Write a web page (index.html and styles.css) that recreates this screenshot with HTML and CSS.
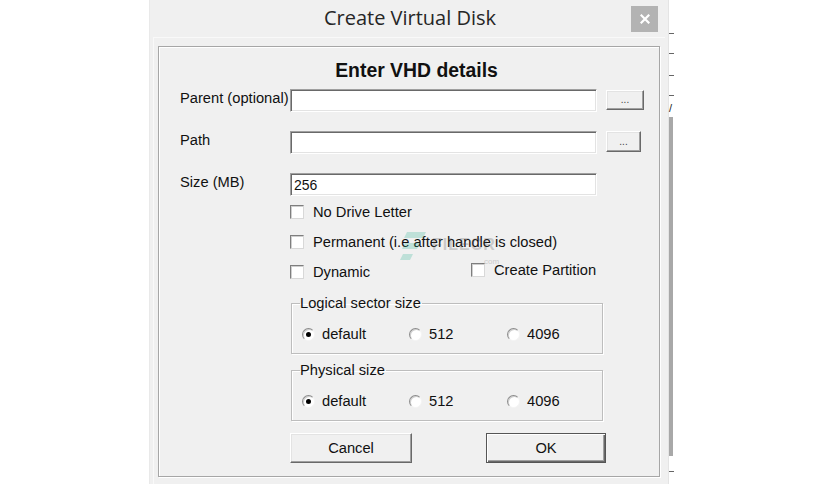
FILE: index.html
```html
<!DOCTYPE html>
<html>
<head>
<meta charset="utf-8">
<title>Create Virtual Disk</title>
<link rel="stylesheet" href="styles.css">
</head>
<body>
<div class="stage">
  <div class="window">
    <div class="titlebar">
      <span></span>
      <span class="title">Create Virtual Disk</span>
      <span class="close"><svg width="10" height="10" viewBox="0 0 10 10"><path d="M1.5 1.5 L8.5 8.5 M8.5 1.5 L1.5 8.5" stroke="#fff" stroke-width="2.2" stroke-linecap="square"/></svg></span>
    </div>
    <div class="frame">
      <div class="panel">
        <h1 class="heading">Enter VHD details</h1>
        <div class="fields">
          <label class="lbl">Parent (optional)</label>
          <div class="input"></div>
          <button class="btn dots">...</button>

          <label class="lbl">Path</label>
          <div class="input"></div>
          <button class="btn dots dots-narrow">...</button>

          <label class="lbl">Size (MB)</label>
          <div class="input">256</div>
          <span></span>
        </div>
        <div class="options">
          <div class="check"><span class="box"></span><span>No Drive Letter</span></div>
          <div class="check"><span class="box"></span><span>Permanent (i.e after handle is closed)</span></div>
          <div class="check-pair">
            <div class="check"><span class="box"></span><span>Dynamic</span></div>
            <div class="check raised"><span class="box"></span><span>Create Partition</span></div>
          </div>

          <fieldset class="group">
            <legend>Logical sector size</legend>
            <div class="radios">
              <div class="radio-item"><span class="radio on"></span><span>default</span></div>
              <div class="radio-item"><span class="radio"></span><span>512</span></div>
              <div class="radio-item"><span class="radio"></span><span>4096</span></div>
            </div>
          </fieldset>

          <fieldset class="group group-second">
            <legend>Physical size</legend>
            <div class="radios">
              <div class="radio-item"><span class="radio on"></span><span>default</span></div>
              <div class="radio-item"><span class="radio"></span><span>512</span></div>
              <div class="radio-item"><span class="radio"></span><span>4096</span></div>
            </div>
          </fieldset>

          <div class="actions">
            <button class="btn action">Cancel</button>
            <button class="btn action default">OK</button>
          </div>
        </div>
        <div class="watermark">
          <svg width="26" height="30" viewBox="0 0 26 30"><path d="M7 0 H26 L23 6 H4 Z M5 11 H20 L17 17 H2 Z M3 22 H13 L10 28 H0 Z" fill="#2fb394"/></svg>
          <span class="wm-text">FILECR</span>
          <span class="wm-com">.com</span>
        </div>
      </div>
    </div>
  </div>
  <div class="strip">
    <span class="tick t1"></span>
    <span class="tick t2"></span>
    <span class="tick t3"></span>
    <span class="tick t4"></span>
    <span class="slash">/</span>
    <span class="bar"></span>
    <span class="tick t5"></span>
  </div>
</div>
</body>
</html>
```

FILE: styles.css
```css
* { box-sizing: border-box; }

html, body {
  margin: 0;
  padding: 0;
  background: #ffffff;
}

body {
  width: 836px;
  height: 484px;
  overflow: hidden;
  font-family: "Liberation Sans", Arial, sans-serif;
  font-size: 14.7px;
  color: #111;
}

.stage {
  display: flex;
  height: 484px;
  padding-left: 149px;
}

.window {
  width: 519px;
  height: 484px;
  background: #f0f0f0;
  border-left: 1px solid #e9e9e9;
  display: flex;
  flex-direction: column;
}

.titlebar {
  height: 37px;
  display: grid;
  grid-template-columns: 1fr auto 1fr;
  align-items: start;
}

.title {
  font-family: "Open Sans", "Noto Sans", sans-serif;
  font-size: 20px;
  line-height: 26px;
  color: #262626;
  padding-top: 5px;
  padding-left: 2px;
}

.close {
  justify-self: end;
  margin-right: 10px;
  margin-top: 6px;
  width: 27px;
  height: 26px;
  background: #b3b3b3;
  display: flex;
  align-items: center;
  justify-content: center;
}

.frame {
  margin: 0 3px 0 3px;
  padding: 8px 5px 7px 4px;
  border-top: 1px solid #f9f9f9;
  border-left: 1px solid #f9f9f9;
  flex: 1;
  display: flex;
}

.panel {
  position: relative;
  flex: 1;
  border: 1px solid #a6a6a6;
  box-shadow: inset 1px 1px 0 #ffffff, 1px 1px 0 #ffffff;
  padding: 12px 0 0 21px;
}

.heading {
  margin: 0 0 8px -6px;
  text-align: center;
  font-family: "Liberation Sans", Arial, sans-serif;
  font-size: 19.4px;
  line-height: 22px;
  font-weight: bold;
  color: #111;
}

.fields {
  display: grid;
  grid-template-columns: 101px 307px 38px;
  column-gap: 9px;
  row-gap: 19px;
  align-items: start;
}

.lbl {
  padding-top: 1px;
  line-height: 17px;
  white-space: nowrap;
}

.input {
  height: 23px;
  background: #fff;
  border: 1px solid;
  border-color: #a0a0a0 #ffffff #ffffff #a0a0a0;
  box-shadow: inset 1px 1px 0 #696969, inset -1px -1px 0 #e3e3e3;
  padding: 2px 0 0 3px;
  font-size: 14px;
  line-height: 18px;
}

.btn {
  font-family: "Liberation Sans", Arial, sans-serif;
  background: #f0f0f0;
  border: 1px solid;
  border-color: #ffffff #696969 #696969 #ffffff;
  box-shadow: inset -1px -1px 0 #a0a0a0, inset 1px 1px 0 #e3e3e3;
  color: #111;
  padding: 0;
  margin: 0;
}

.dots {
  width: 38px;
  height: 20px;
  margin-top: 1px;
  font-size: 10px;
  line-height: 14px;
  color: #444;
}

.dots-narrow {
  width: 35px;
  height: 21px;
  margin-top: 0;
}

.options {
  padding: 8px 0 0 110px;
  display: flex;
  flex-direction: column;
}

.check {
  display: flex;
  align-items: center;
  gap: 9px;
  height: 16px;
  line-height: 17px;
  margin-bottom: 14px;
  white-space: nowrap;
}

.box {
  width: 14px;
  height: 14px;
  flex: none;
  background: #fff;
  border: 1px solid;
  border-color: #7e7e7e #d8d8d8 #d8d8d8 #7e7e7e;
  box-shadow: inset 1px 1px 0 #cfcfcf;
}

.check-pair {
  display: grid;
  grid-template-columns: 181px auto;
  align-items: start;
}

.check-pair .check {
  margin-bottom: 0;
}

.check.raised {
  margin-top: -2px;
}

.group {
  margin: 15px 0 0 1px;
  width: 312px;
  border: 1px solid #bdbdbd;
  box-shadow: inset 1px 1px 0 #ffffff, 1px 1px 0 #ffffff;
  padding: 14px 0 12px 8px;
}

.group-second {
  margin-top: 8px;
}

.group legend {
  padding: 0 1px 0 0;
  line-height: 17px;
  color: #111;
}

.radios {
  display: grid;
  grid-template-columns: 107px 98px auto;
  padding-left: 2px;
  height: 15px;
  align-items: center;
}

.radio-item {
  display: flex;
  align-items: center;
  gap: 7px;
  line-height: 17px;
}

.radio {
  width: 13px;
  height: 13px;
  border-radius: 50%;
  background: #fff;
  border: 1px solid;
  border-color: #8c8c8c #f4f4f4 #f4f4f4 #8c8c8c;
  box-shadow: inset 1px 1px 0 #cfcfcf;
  display: flex;
  align-items: center;
  justify-content: center;
  flex: none;
}

.radio.on::after {
  content: "";
  width: 5px;
  height: 5px;
  border-radius: 50%;
  background: #000;
}

.actions {
  display: flex;
  gap: 74px;
  margin-top: 12px;
}

.action {
  width: 122px;
  height: 30px;
  font-size: 14.7px;
}

.action.default {
  width: 120px;
  border: 1px solid #555;
  box-shadow: inset 1px 1px 0 #ffffff, inset -1px -1px 0 #696969, inset -2px -2px 0 #a0a0a0;
}

.watermark {
  position: absolute;
  left: 241px;
  top: 185px;
  display: flex;
  align-items: flex-start;
  gap: 6px;
  opacity: 0.25;
  pointer-events: none;
}

.wm-text {
  margin-top: 4px;
  font-weight: bold;
  font-size: 16px;
  letter-spacing: 1px;
  color: #555;
}

.wm-com {
  margin-top: 25px;
  margin-left: -20px;
  font-size: 8px;
  color: #555;
}

.strip {
  width: 9px;
  height: 484px;
  border-left: 1px solid #e4e4e4;
  display: flex;
  flex-direction: column;
  align-items: flex-start;
}

.tick {
  width: 5px;
  height: 1px;
  background: #666;
}

.t1 { margin-top: 33px; }
.t2 { margin-top: 19px; }
.t3 { margin-top: 21px; }
.t4 { margin-top: 19px; }
.t5 { margin-top: 15px; }

.slash {
  margin-top: 6px;
  font-size: 11px;
  line-height: 12px;
  color: #222;
}

.bar {
  margin-top: 3px;
  width: 4px;
  height: 339px;
  background: #a8a8a8;
}
```
